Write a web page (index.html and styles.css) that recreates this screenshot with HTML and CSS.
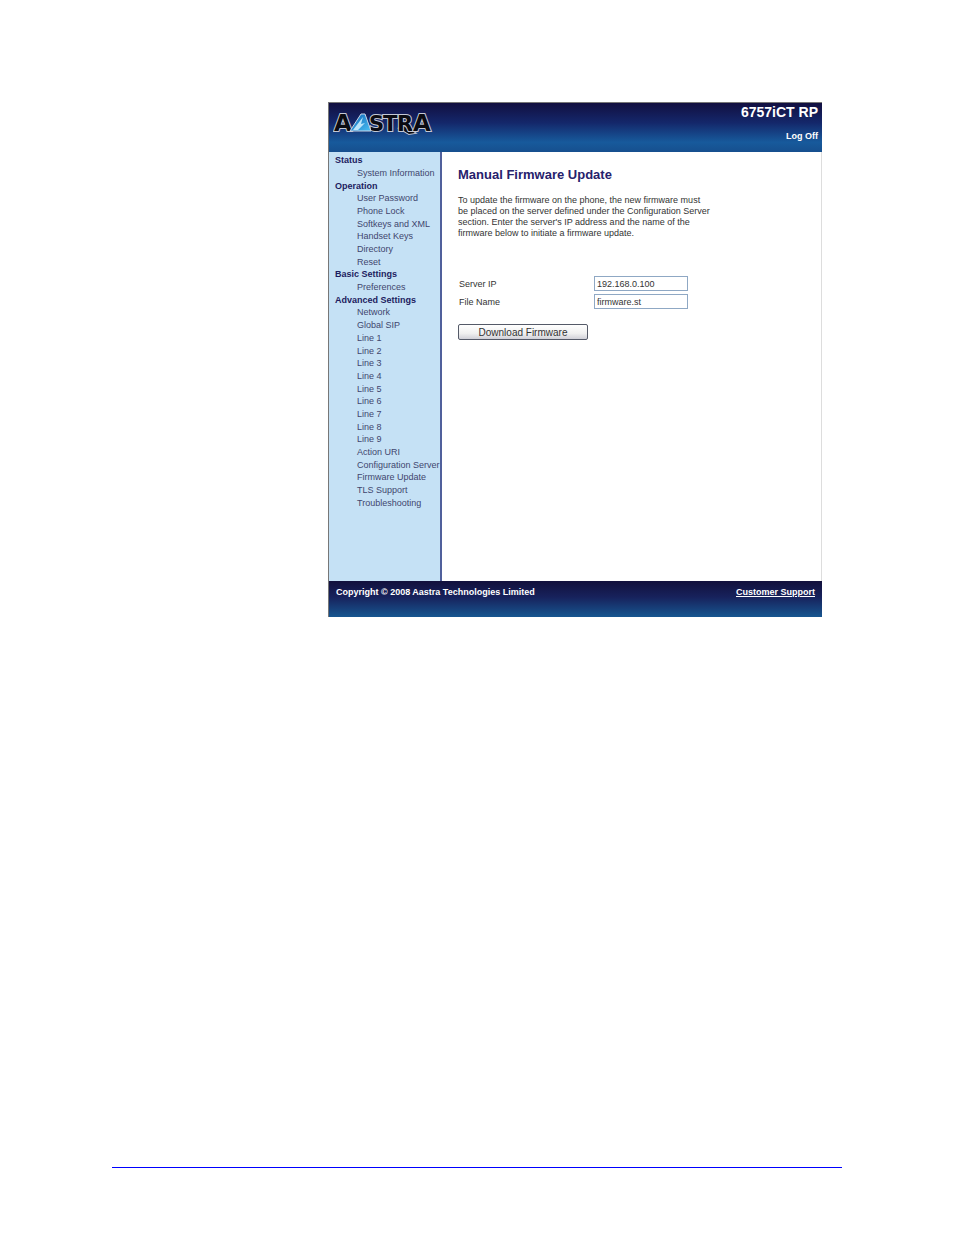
FILE: index.html
```
<!DOCTYPE html>
<html lang="en">
<head>
    <meta charset="UTF-8">
    <meta name="viewport" content="width=device-width, initial-scale=1.0">
    <title>Manual Firmware Update</title>
    <link rel="stylesheet" href="styles.css">
</head>
<body>
    <div class="page">
        <div class="window">
            <header class="header">
                <svg class="logo" viewBox="0 0 100 26" role="img" aria-label="Aastra">
                    <defs>
                        <linearGradient id="sky" x1="0" y1="0" x2="1" y2="1">
                            <stop offset="0" stop-color="#0a62b4"/>
                            <stop offset="1" stop-color="#4cc0f4"/>
                        </linearGradient>
                    </defs>
                    <g class="logo-text">
                        <path d="M69 14 L82 22 L76 23 L66 17 Z"/>
                        <text x="1" y="20" font-size="23">A</text>
                        <text x="64" y="20" font-size="21">R</text>
                        <text x="50" y="20" font-size="21">T</text>
                        <text x="36" y="20" font-size="21">S</text>
                        <text x="80" y="20" font-size="23">A</text>
                    </g>
                    <path d="M17 20 L28 3 L32 3 L38 20 Z" fill="url(#sky)" stroke="#c9d4e6"/>
                    <path d="M20 19 L30 6 L28 13 L32 12 L25 19 Z" fill="#b9e4fb"/>
                </svg>
                <div class="account">
                    <div class="model">6757iCT RP</div>
                    <a class="logoff" href="#">Log Off</a>
                </div>
            </header>
            <div class="body">
                <nav class="sidebar">
                    <h2>Status</h2>
                    <a href="#">System Information</a>
                    <h2>Operation</h2>
                    <a href="#">User Password</a>
                    <a href="#">Phone Lock</a>
                    <a href="#">Softkeys and XML</a>
                    <a href="#">Handset Keys</a>
                    <a href="#">Directory</a>
                    <a href="#">Reset</a>
                    <h2>Basic Settings</h2>
                    <a href="#">Preferences</a>
                    <h2>Advanced Settings</h2>
                    <a href="#">Network</a>
                    <a href="#">Global SIP</a>
                    <a href="#">Line 1</a>
                    <a href="#">Line 2</a>
                    <a href="#">Line 3</a>
                    <a href="#">Line 4</a>
                    <a href="#">Line 5</a>
                    <a href="#">Line 6</a>
                    <a href="#">Line 7</a>
                    <a href="#">Line 8</a>
                    <a href="#">Line 9</a>
                    <a href="#">Action URI</a>
                    <a href="#">Configuration Server</a>
                    <a href="#">Firmware Update</a>
                    <a href="#">TLS Support</a>
                    <a href="#">Troubleshooting</a>
                </nav>
                <main class="content">
                    <h1>Manual Firmware Update</h1>
                    <p>To update the firmware on the phone, the new firmware must be placed on the server defined under the Configuration Server section. Enter the server's IP address and the name of the firmware below to initiate a firmware update.</p>
                    <form>
                        <div class="row">
                            <label for="server">Server IP</label>
                            <input type="text" id="server" value="192.168.0.100">
                        </div>
                        <div class="row">
                            <label for="file">File Name</label>
                            <input type="text" id="file" value="firmware.st">
                        </div>
                        <button type="button">Download Firmware</button>
                    </form>
                </main>
            </div>
            <footer class="footer">
                <span>Copyright © 2008 Aastra Technologies Limited</span>
                <a href="#">Customer Support</a>
            </footer>
        </div>
        <hr class="rule">
    </div>
</body>
</html>
```
FILE: styles.css
```
* {
    box-sizing: border-box;
}
body {
    margin: 0;
    background: #fff;
    font-family: "Liberation Sans", Arial, sans-serif;
    font-size: 9px;
    color: #333;
}
.page {
    display: flex;
    flex-direction: column;
    justify-content: space-between;
    min-height: 100vh;
    padding: 102px 112px 67px;
}
.window {
    margin: 0 20px 0 216px;
    border-top: 1px solid #777;
    border-left: 1px solid #777;
}
.header {
    display: flex;
    justify-content: space-between;
    height: 49px;
    padding: 2px 4px 0;
    background: linear-gradient(#120f40, #14276a 40%, #175a9c 80%, #164f8e);
    color: #fff;
    font-weight: bold;
}
.logo {
    width: 100px;
    height: 26px;
    margin-top: 6px;
}
.logo-text {
    font-family: "DejaVu Sans", sans-serif;
    font-weight: bold;
    fill: #0b0b12;
    stroke: #c4c8d4;
    stroke-width: 2px;
    paint-order: stroke;
}
.account {
    text-align: right;
}
.model {
    font-size: 14px;
    line-height: 15px;
    margin-bottom: 11px;
}
.logoff {
    color: #fff;
    text-decoration: none;
}
.body {
    display: flex;
    min-height: 429px;
    border-right: 1px solid #ddd;
}
.sidebar {
    display: grid;
    grid-auto-rows: 1fr;
    align-items: center;
    flex: 0 0 113px;
    padding: 2px 0 72px 6px;
    background: #c5e1f5;
    border-right: 2px solid #50609c;
}
.sidebar h2 {
    margin: 0;
    font-size: 9px;
    line-height: 12px;
    color: #1d1c60;
}
.sidebar a {
    padding-left: 22px;
    line-height: 12px;
    color: #41466e;
    text-decoration: none;
    white-space: nowrap;
}
.content {
    flex: 1;
    padding: 15px 16px;
}
.content h1 {
    margin: 0 0 12px;
    font-size: 13px;
    line-height: 16px;
    color: #26216c;
}
.content p {
    max-width: 254px;
    margin: 0 0 37px;
    line-height: 11px;
}
.row {
    display: flex;
    align-items: center;
    margin-bottom: 3px;
}
.row label {
    width: 136px;
    padding-left: 1px;
}
.row input {
    width: 94px;
    height: 15px;
    padding: 0 2px;
    border: 1px solid #8fa8c4;
    background: #fff;
    font: inherit;
    color: #333;
}
button {
    width: 130px;
    height: 16px;
    margin-top: 12px;
    padding: 0;
    border: 1px solid #555a68;
    border-radius: 2px;
    background: linear-gradient(#fff, #f0f0f0 60%, #d0d0d8);
    font: inherit;
    font-size: 10px;
    color: #333;
}
.footer {
    display: flex;
    justify-content: space-between;
    height: 36px;
    padding: 6px 7px 0;
    background: linear-gradient(#12103c, #17225c 45%, #175690);
    color: #fff;
    font-weight: bold;
}
.footer a {
    color: #fff;
}
.rule {
    width: 100%;
    margin: 0;
    border: 0;
    border-top: 1px solid #00f;
}
```
